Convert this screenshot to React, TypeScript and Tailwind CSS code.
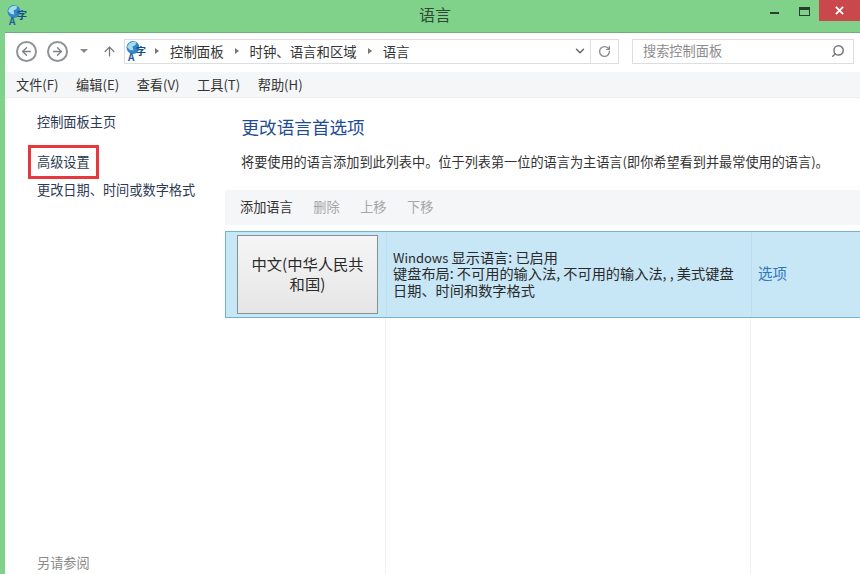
import { ChevronDown, RotateCw, Search, ArrowLeft, ArrowRight, ArrowUp } from "lucide-react";

const font = { fontFamily: '"Noto Sans CJK SC", "Liberation Sans", sans-serif' };

function GlobeIcon() {
  return (
    <div className="relative w-[20px] h-[20px] shrink-0">
      <svg viewBox="0 0 20 20" className="w-[20px] h-[20px]">
        <circle cx="7" cy="6.5" r="6.5" fill="#2f86c8" />
        <path d="M3 2.5 Q6 0 10 1 L9.5 4 L6.5 5.5 L7.5 9.5 L4 9 L1 6 Z" fill="#a8dcea" />
      </svg>
      <span className="absolute left-[10px] top-[4px] text-[10px] leading-[11px] font-bold text-[#174a80]">字</span>
      <span className="absolute left-[2px] top-[11px] text-[10px] leading-[9px] font-bold text-[#2a5f9a]">A</span>
    </div>
  );
}

function NavCircle(props: { children: React.ReactNode }) {
  return (
    <div className="w-[21px] h-[21px] rounded-full border-2 border-[#8f9499] flex items-center justify-center text-[#7c8186]">
      {props.children}
    </div>
  );
}

function Crumb(props: { label: string }) {
  return (
    <>
      <span className="w-0 h-0 border-y-[3.5px] border-y-transparent border-l-[4px] border-l-[#777] mx-[11px]" />
      <span>{props.label}</span>
    </>
  );
}

export default function App() {
  return (
    <div style={font} className="w-[860px] h-[574px] overflow-hidden bg-[#80d189] flex flex-col text-[13.2px] text-[#2a2a2a]">
      <div className="h-[32px] shrink-0 grid grid-cols-[1fr_auto_1fr] items-start">
        <div className="pl-[7px] pt-[5px]">
          <GlobeIcon />
        </div>
        <div className="text-[16px] leading-[20px] pt-[4px] text-[#2f4a38] ml-[10px]">语言</div>
        <div className="flex justify-end items-start">
          <div className="w-[9px] h-[2px] bg-[#26402c] mt-[12px] mr-[20px]" />
          <div className="w-[11px] h-[9px] border border-[#26402c] border-t-[3px] mt-[7px] mr-[9px]" />
          <div className="w-[41px] h-[21px] bg-[#c9484c] text-white flex items-center justify-center">
            <svg viewBox="0 0 10 10" className="w-[9px] h-[9px]">
              <path d="M1 1 L9 9 M9 1 L1 9" stroke="#fff" strokeWidth="2" />
            </svg>
          </div>
        </div>
      </div>

      <div className="flex-1 ml-[5px] bg-white flex flex-col min-h-0 border-t border-[#6fae78]">
        <div className="h-[39px] shrink-0 flex items-center pb-[3px]">
          <div className="ml-[11px] flex items-center gap-[10px]">
            <NavCircle><ArrowLeft size={13} strokeWidth={2.5} /></NavCircle>
            <NavCircle><ArrowRight size={13} strokeWidth={2.5} /></NavCircle>
          </div>
          <span className="ml-[12px] w-0 h-0 border-x-[4px] border-x-transparent border-t-[4px] border-t-[#888]" />
          <ArrowUp size={15} strokeWidth={2} className="ml-[14px] text-[#777]" />
          <div className="ml-[7px] w-[495px] h-[25px] border border-[#dcdfe2] flex items-center text-[#333]">
            <div className="ml-[1px] mr-[-2px]"><GlobeIcon /></div>
            <div className="flex items-center whitespace-nowrap text-[13.4px]">
              <Crumb label="控制面板" />
              <Crumb label="时钟、语言和区域" />
              <Crumb label="语言" />
            </div>
            <div className="ml-auto flex items-center h-full">
              <ChevronDown size={14} strokeWidth={2.5} className="text-[#666] mr-[3px]" />
              <div className="w-[28px] h-full border-l border-[#dcdfe2] flex items-center justify-center">
                <RotateCw size={13} strokeWidth={2.5} className="text-[#8a8a8a]" />
              </div>
            </div>
          </div>
          <div className="ml-[13px] w-[222px] h-[25px] border border-[#dcdfe2] flex items-center justify-between pl-[10px] pr-[8px] text-[#8b8b8b]">
            <span>搜索控制面板</span>
            <Search size={14} strokeWidth={2.5} className="text-[#777] -scale-x-100" />
          </div>
        </div>

        <div className="h-[26px] shrink-0 bg-[#f5f6f7] border-b border-[#eceded] flex items-center pl-[11px] gap-[17.5px] text-[#333]">
          <span>文件(F)</span>
          <span>编辑(E)</span>
          <span>查看(V)</span>
          <span>工具(T)</span>
          <span>帮助(H)</span>
        </div>

        <div className="flex-1 flex min-h-0">
          <div className="w-[220px] shrink-0 flex flex-col pl-[32px] pt-[14px] text-[#2c3a52]">
            <div className="leading-[20px]">控制面板主页</div>
            <div className="relative leading-[20px] mt-[20px] w-fit">
              高级设置
              <div className="absolute left-[-9px] top-[-7px] w-[71px] h-[34px] border-[3px] border-[#e8383d]" />
            </div>
            <div className="leading-[20px] mt-[8px]">更改日期、时间或数字格式</div>
            <div className="mt-auto mb-[1px] text-[#8a8a8a] leading-[20px]">另请参阅</div>
          </div>

          <div className="flex-1 flex flex-col min-w-0">
            <div className="pl-[16.5px] pt-[16px] text-[17.6px] leading-[26px] text-[#1f4d94]">更改语言首选项</div>
            <div className="pl-[16px] pt-[12px] text-[13.17px] leading-[20px] whitespace-nowrap text-[#333]">
              将要使用的语言添加到此列表中。位于列表第一位的语言为主语言(即你希望看到并最常使用的语言)。
            </div>
            <div className="mt-[18px] h-[35px] shrink-0 bg-[#f5f6f7] flex items-center pl-[15px] gap-[20.5px] pb-[1px]">
              <span className="text-[#333]">添加语言</span>
              <span className="text-[#a6a6a6]">删除</span>
              <span className="text-[#a6a6a6]">上移</span>
              <span className="text-[#a6a6a6]">下移</span>
            </div>
            <div className="mt-[6px] h-[87px] shrink-0 bg-[#c7e6f6] border-y border-l border-[#71b3d0] flex text-[#2a2a2a]">
              <div className="ml-[11px] mt-[3px] w-[141px] h-[79px] border border-[#8a8f94] bg-gradient-to-b from-[#f5f5f5] to-[#e6e6e6] flex items-center justify-center text-center text-[15.3px] leading-[20px] pb-[4px]">
                <span>中文(中华人民共<br />和国)</span>
              </div>
              <div className="w-[365px] ml-[8px] pl-[6px] pb-[2px] border-l border-[#bcdff0] flex flex-col justify-center text-[14.2px] leading-[16.5px] whitespace-nowrap">
                <div className="h-[16.5px]"><span className="text-[13px]">Windows</span> 显示语言: 已启用</div>
                <div className="h-[16.5px]">键盘布局: 不可用的输入法, 不可用的输入法, , 美式键盘</div>
                <div className="h-[16.5px]">日期、时间和数字格式</div>
              </div>
              <div className="flex-1 border-l border-[#bcdff0] flex items-center pl-[6px] pb-[4px] text-[#2f78c0] text-[14.5px]">选项</div>
            </div>
            <div className="flex-1 flex">
              <div className="w-[161px] border-r border-[#f0f0f0]" />
              <div className="w-[365px] border-r border-[#f0f0f0]" />
            </div>
          </div>
        </div>
      </div>
    </div>
  );
}
